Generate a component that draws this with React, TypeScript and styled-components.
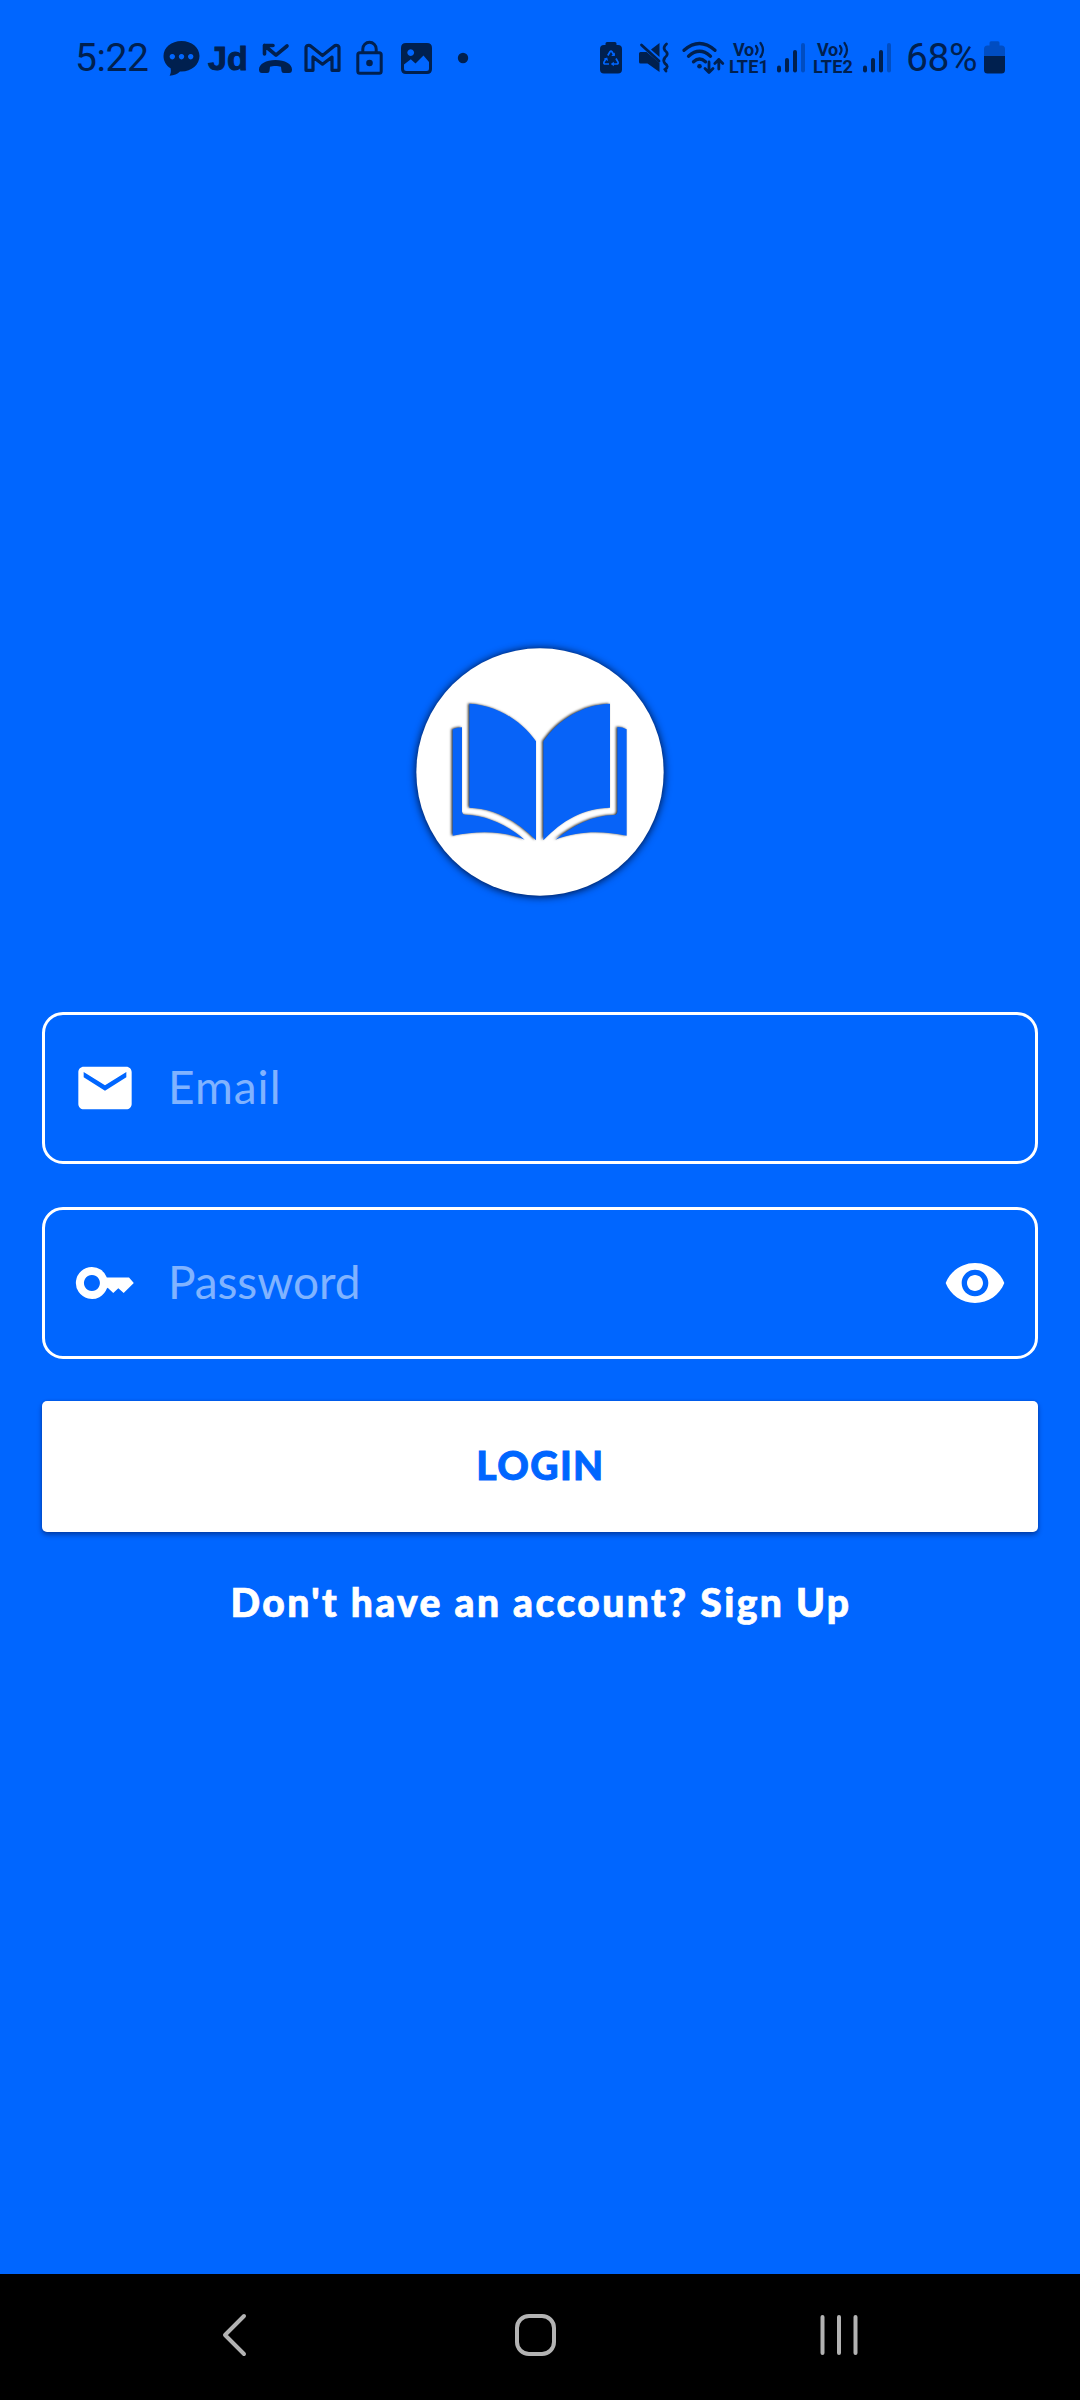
import React from "react";
import styled, { createGlobalStyle } from "styled-components";

const BLUE = "#0066ff";
const INK = "#00204f";

const GlobalStyle = createGlobalStyle`
  *, *::before, *::after { box-sizing: border-box; }
  body { margin: 0; background: ${BLUE}; }
`;

const Screen = styled.div`
  width: 1080px;
  height: 2400px;
  display: flex;
  flex-direction: column;
  background: ${BLUE};
  font-family: Lato, "Open Sans", sans-serif;
  overflow: hidden;
`;

const StatusBar = styled.header`
  height: 116px;
  flex: none;
  display: flex;
  align-items: center;
  justify-content: space-between;
  padding: 0 75px;
  color: ${INK};
  font-family: Roboto, sans-serif;
`;

const StatusGroup = styled.div`
  display: flex;
  align-items: center;
`;

const StatusText = styled.span<{ $width: number; $before?: number }>`
  width: ${(p) => p.$width}px;
  margin-left: ${(p) => p.$before ?? 0}px;
  font-size: 39px;
  line-height: 46px;
  letter-spacing: -0.4px;
  white-space: nowrap;
`;

const AppBadge = styled.span`
  width: 41px;
  margin-left: 8px;
  font-family: "Liberation Sans", sans-serif;
  font-weight: 700;
  font-size: 34px;
  line-height: 36px;
  -webkit-text-stroke: 1px ${INK};
  white-space: nowrap;
`;

const Glyph = styled.svg<{ $width: number; $before?: number }>`
  display: block;
  flex: none;
  width: ${(p) => p.$width}px;
  height: 36px;
  margin-left: ${(p) => p.$before ?? 0}px;
  overflow: visible;
`;

const Carrier = styled.div<{ $before: number }>`
  width: 40px;
  height: 36px;
  margin-left: ${(p) => p.$before}px;
  display: flex;
  flex-direction: column;
  align-items: center;
  justify-content: center;
  font-weight: 700;
  font-size: 18px;
  line-height: 17.5px;
  letter-spacing: 0.2px;
  white-space: nowrap;
`;

const CarrierTop = styled.span`
  display: flex;
  align-items: center;
  height: 17px;
  letter-spacing: -0.3px;
`;

const Main = styled.main`
  flex: 1;
  display: flex;
  flex-direction: column;
  align-items: center;
  padding: 514px 42px 0;
`;

const Logo = styled.svg`
  display: block;
  flex: none;
  width: 280px;
  height: 280px;
  margin-bottom: 102px;
  overflow: visible;
`;

const Disc = styled.circle`
  fill: #fff;
  filter: drop-shadow(0 2px 13px rgba(0, 10, 40, 1));
`;

const Pages = styled.g`
  fill: #0763f8;
  filter: drop-shadow(-4px -1px 2.5px rgba(20, 16, 10, 0.85));
`;

const Form = styled.div`
  align-self: stretch;
  display: flex;
  flex-direction: column;
`;

const Field = styled.label`
  height: 152px;
  display: flex;
  align-items: center;
  padding: 0 28px;
  border: 3px solid #fff;
  border-radius: 21px;

  & + & {
    margin-top: 43px;
  }
`;

const FieldIcon = styled.svg`
  display: block;
  flex: none;
  width: 64px;
  height: 64px;
  fill: #fff;
`;

const Placeholder = styled.span<{ $spacing: number }>`
  flex: 1;
  padding: 0 0 3px 31px;
  color: #80b3ff;
  font-size: 46px;
  line-height: 60px;
  letter-spacing: ${(p) => p.$spacing}px;
`;

const LoginButton = styled.button`
  height: 131px;
  margin-top: 42px;
  padding: 0 0 3px 1px;
  border: 0;
  border-radius: 5px;
  background: #fff;
  color: ${BLUE};
  font-family: Lato, sans-serif;
  font-weight: 900;
  font-size: 39px;
  line-height: 48px;
  letter-spacing: 1.4px;
  -webkit-text-stroke: 0.9px ${BLUE};
  box-shadow: 0 3px 5px rgba(0, 20, 80, 0.45), 0 0 3px rgba(0, 20, 80, 0.2);
`;

const SignUp = styled.p`
  margin: 44px 0 0;
  padding-left: 2px;
  color: #fff;
  font-weight: 900;
  font-size: 39px;
  line-height: 52px;
  letter-spacing: 2.4px;
  -webkit-text-stroke: 0.7px #fff;
  text-align: center;
  white-space: nowrap;
`;

const NavBar = styled.nav`
  height: 126px;
  flex: none;
  display: grid;
  grid-template-columns: repeat(3, 302.5px);
  place-items: center;
  padding: 0 0 4px 82.5px;
  background: #000;
`;

const NavIcon = styled.svg`
  display: block;
  width: 48px;
  height: 48px;
  fill: none;
  stroke: #b3b3b3;
  stroke-width: 4;
  stroke-linecap: round;
  stroke-linejoin: round;
`;

function Signal({ before }: { before: number }) {
  return (
    <Glyph $width={28} $before={before} viewBox="0 0 28 36" fill={INK}>
      <rect x="0" y="25.5" width="4" height="7" rx="2" />
      <rect x="8" y="18" width="4" height="14.5" rx="2" />
      <rect x="16" y="10" width="4" height="22.5" rx="2" />
      <rect x="24" y="3" width="4" height="29.5" rx="2" opacity=".35" />
    </Glyph>
  );
}

function VoLte({ line, before }: { line: string; before: number }) {
  return (
    <Carrier $before={before}>
      <CarrierTop>
        Vo
        <svg width="11" height="17" viewBox="0 0 11 17" fill="none" stroke={INK} strokeWidth="2.2" strokeLinecap="round">
          <path d="M2 5q3 4 0 8M6.500 2q5 7 0 14" />
        </svg>
      </CarrierTop>
      <span>{line}</span>
    </Carrier>
  );
}

export default function App() {
  return (
    <Screen>
      <GlobalStyle />
      <StatusBar>
        <StatusGroup>
          <StatusText $width={73}>5:22</StatusText>
          <Glyph $width={37} $before={15} viewBox="0 0 37 36" fill={INK}>
            <path
              fillRule="evenodd"
              d="M18.500 1C28.600 1 36.500 7.500 36.500 16S28.600 31.500 18.500 31.500H17C14.500 34 11 35.500 6.600 35.700C7.800 33.500 8.200 31.500 7.600 28.300C3 25.500.5 21 .5 16C.5 7.500 8.500 1 18.500 1ZM9.300 14a2.700 2.700 0 1 0 .01 0ZM18.500 14a2.700 2.700 0 1 0 .01 0ZM27.700 14a2.700 2.700 0 1 0 .01 0Z"
            />
          </Glyph>
          <AppBadge>Jd</AppBadge>
          <Glyph $width={33} $before={10} viewBox="0 0 33 36" fill="none" stroke={INK}>
            <path d="M5.500 14V5.500H14M5.500 5.500l11.500 9.700L28 6" strokeWidth="3.600" strokeLinecap="round" strokeLinejoin="round" />
            <path
              d="M16.500 20C7 20 0 24 0 29.500c0 2.500 1 3.500 3 3.500h5c2 0 2.500-1 2.700-3.500l.3-2.700c3-1.200 8-1.200 11 0l.3 2.700c.2 2.500.7 3.500 2.700 3.500h5c2 0 3-1 3-3.500C33 24 26 20 16.500 20Z"
              fill={INK}
              stroke="none"
            />
          </Glyph>
          <Glyph $width={37} $before={12} viewBox="0 0 37 36" fill="none" stroke={INK} strokeWidth="3.200" strokeLinejoin="round">
            <path d="M2 8C2 5.500 5 4.500 7 6.200L18.500 15.500L30 6.200C32 4.500 35 5.500 35 8V30.300H28V17L18.500 24.200L9 17V30.300H2Z" />
          </Glyph>
          <Glyph $width={27} $before={15} viewBox="0 0 27 36" fill="none" stroke={INK} strokeWidth="3">
            <rect x="1.800" y="12.700" width="23.400" height="20.600" rx="2" />
            <path d="M6.800 12.500V9a6.700 6.700 0 0 1 13.400 0v3.500" />
            <circle cx="13.500" cy="23" r="3.300" fill={INK} stroke="none" />
          </Glyph>
          <Glyph $width={31} $before={18} viewBox="0 0 31 36" fill={INK}>
            <path
              fillRule="evenodd"
              d="M5 3H26Q31 3 31 8V29Q31 34 26 34H5Q0 34 0 29V8Q0 3 5 3ZM9.700 9.200a3.400 3.400 0 1 0 .01 0ZM3 24.500V28.500Q3 31 5.500 31H25.500Q28 31 28 28.500V22L22.500 15.500L14.500 23.500L9.800 19.200Z"
            />
          </Glyph>
          <Glyph $width={10} $before={26} viewBox="0 0 10 36" fill={INK}>
            <circle cx="5" cy="18" r="5.200" />
          </Glyph>
        </StatusGroup>

        <StatusGroup>
          <Glyph $width={22} viewBox="0 0 22 36" fill={INK}>
            <path d="M7 2h8q1.500 0 1.500 1.500V5H18q4 0 4 4v20.500q0 4-4 4H4q-4 0-4-4V9q0-4 4-4h1.500V3.500Q5.500 2 7 2Z" />
            <path d="M7.800 15.500L10 11.800q1-1.500 2 0l2.200 3.700M16 18.500l2 3.600q.7 1.900-1.300 1.900h-3.700M9 24H5.300q-2 0-1.300-1.900l2-3.600" fill="none" stroke={BLUE} strokeWidth="1.700" />
            <path d="M14.800 12.500v3.600h-3.600ZM13.800 21.700v4.600l-3-2.300ZM3.700 18.700l3.500-1.100.9 3.400Z" fill={BLUE} />
          </Glyph>
          <Glyph $width={30} $before={17} viewBox="0 0 30 36" fill={INK}>
            <path d="M20.500 3v14L12 9.500ZM1.500 12h6l13 11v9L8.500 23.500h-7Q0 23.500 0 22v-8.500Q0 12 1.500 12Z" />
            <path d="M2.500 5L20 21" stroke={INK} strokeWidth="2.800" strokeLinecap="round" />
            <path d="M27.500 4q-4 3.500-1.500 6.500q4.500 3.500 0 7q-2.500 3 0 6q4.500 3 0 6l1 1.500" fill="none" stroke={INK} strokeWidth="2.800" strokeLinecap="round" />
          </Glyph>
          <Glyph $width={42} $before={13} viewBox="0 0 42 36" fill="none" stroke={INK} strokeWidth="3.300" strokeLinecap="round">
            <path d="M2 10.300Q17.500-3.200 33 10.300M6.500 16.200Q17.500 6.300 28.500 16.200M11.500 21.800Q17.500 16 23.500 21.800" />
            <circle cx="17.500" cy="26.300" r="2.300" fill={INK} stroke="none" />
            <path d="M27 22v10M23 28.500l4 4 4-4M36.800 29V19.500M32.800 23.500l4-4 4 4" strokeWidth="2.800" strokeLinejoin="round" />
          </Glyph>
          <VoLte line="LTE1" before={5} />
          <Signal before={8} />
          <VoLte line="LTE2" before={8} />
          <Signal before={10} />
          <StatusText $width={72} $before={15}>68%</StatusText>
          <Glyph $width={21} $before={6} viewBox="0 0 21 36" fill={INK}>
            <path d="M0 16V9q0-3.500 3.500-3.500H5.500V3Q5.500 1.300 7 1.300h7q1.500 0 1.500 1.700v2.500h2Q21 5.500 21 9v7Z" opacity=".35" />
            <path d="M0 16h21v14q0 3.500-3.500 3.500h-14Q0 33.500 0 30Z" />
          </Glyph>
        </StatusGroup>
      </StatusBar>

      <Main>
        <Logo viewBox="0 0 840 840" role="img" aria-label="Open book">
          <Disc cx="420" cy="426" r="371" />
          <Pages>
            <path d="M208 221C292 225 365 273 408 334V631C350 570 280 535 208 533Z" />
            <path d="M630 221C550 223 475 268 430 334V631C488 570 550 535 630 533Z" />
            <path d="M158 298Q170 292 186 292V545Q187 553 195 554C260 556 320 583 374 629C300 600 230 604 158 617Z" />
            <path d="M680 298Q668 291 652 291V545Q651 554 643 555C580 556 520 585 466 629C540 601 610 603 680 617Z" />
          </Pages>
        </Logo>

        <Form>
          <Field>
            <FieldIcon viewBox="0 0 24 24">
              <path d="M20 4H4c-1.100 0-2 .9-2 2v12c0 1.100.9 2 2 2h16c1.100 0 2-.9 2-2V6c0-1.100-.9-2-2-2zm0 4l-8 5-8-5V6l8 5 8-5v2z" />
            </FieldIcon>
            <Placeholder $spacing={1}>Email</Placeholder>
          </Field>
          <Field>
            <FieldIcon viewBox="0 0 24 24">
              <path
                fillRule="evenodd"
                d="M7.100 6a6 6 0 1 0 5.600 8.100L13 13.800 15.100 15.750 17 14 19 15.750 22.800 12 21 9.900H12.700A6 6 0 0 0 7.100 6ZM7.100 9a3 3 0 1 1-.01 0Z"
              />
            </FieldIcon>
            <Placeholder $spacing={-0.1}>Password</Placeholder>
            <FieldIcon viewBox="0 0 24 24">
              <path d="M12 4.500C7 4.500 2.730 7.610 1 12c1.730 4.390 6 7.500 11 7.500s9.270-3.110 11-7.500c-1.730-4.390-6-7.500-11-7.500zM12 17c-2.760 0-5-2.240-5-5s2.240-5 5-5 5 2.240 5 5-2.240 5-5 5zm0-8c-1.660 0-3 1.340-3 3s1.340 3 3 3 3-1.340 3-3-1.340-3-3-3z" />
            </FieldIcon>
          </Field>
          <LoginButton type="button">LOGIN</LoginButton>
          <SignUp>Don't have an account? Sign Up</SignUp>
        </Form>
      </Main>

      <NavBar>
        <NavIcon viewBox="0 0 48 48">
          <path d="M34 5L15 24L34 43" />
        </NavIcon>
        <NavIcon viewBox="0 0 48 48">
          <rect x="5" y="5" width="37" height="38" rx="12" />
        </NavIcon>
        <NavIcon viewBox="0 0 48 48">
          <path d="M7.500 6V42M24 6V42M40.500 6V42" />
        </NavIcon>
      </NavBar>
    </Screen>
  );
}
